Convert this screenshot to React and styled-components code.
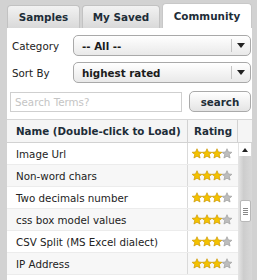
import styled, { createGlobalStyle } from "styled-components";

const GlobalStyle = createGlobalStyle`
  html, body {
    margin: 0;
    padding: 0;
    background: #d2d2d2;
    overflow: hidden;
  }
  body {
    font-family: "DejaVu Sans", Verdana, sans-serif;
    color: #222;
  }
`;

const Frame = styled.div`
  width: 257px;
  height: 280px;
  padding: 3px 5px 0 7px;
  box-sizing: border-box;
  display: flex;
  flex-direction: column;
  overflow: hidden;
`;

const TabBar = styled.div`
  display: flex;
  align-items: flex-end;
  gap: 2px;
  height: 25px;
`;

const Tab = styled.div`
  width: ${(p) => p.width}px;
  height: ${(p) => (p.active ? 25 : 23)}px;
  box-sizing: border-box;
  display: flex;
  align-items: center;
  justify-content: center;
  font-size: 10.4px;
  font-weight: bold;
  color: #1e2d38;
  border-radius: 4px 4px 0 0;
  border: 1px solid ${(p) => (p.active ? "#c8c8c8" : "#c2c2c2")};
  border-bottom: none;
  background: ${(p) =>
    p.active ? "#fff" : "linear-gradient(#f2f2f2, #d9d9d9)"};
`;

const Panel = styled.div`
  flex: 1;
  background: #fff;
  display: flex;
  flex-direction: column;
  padding-top: 7px;
`;

const FormRow = styled.div`
  display: grid;
  grid-template-columns: 61px 1fr;
  align-items: center;
  padding: 0 1px 0 5px;
  margin-bottom: 6px;
`;

const Label = styled.span`
  font-size: 10.3px;
  color: #222;
`;

const Select = styled.div`
  height: 21px;
  box-sizing: border-box;
  border: 1px solid #a9a9a9;
  border-radius: 5px;
  background: linear-gradient(#ffffff, #e9e9e9);
  display: flex;
  align-items: center;
  font-size: 10.3px;
  font-weight: bold;
  color: #1b1b1b;
`;

const SelectText = styled.span`
  flex: 1;
  padding-left: 8px;
`;

const Arrow = styled.span`
  width: 18px;
  height: 13px;
  border-left: 1px solid #c4c4c4;
  display: flex;
  align-items: center;
  justify-content: center;
  &::after {
    content: "";
    border-left: 4px solid transparent;
    border-right: 4px solid transparent;
    border-top: 5px solid #222;
  }
`;

const SearchRow = styled.div`
  display: flex;
  align-items: center;
  justify-content: space-between;
  padding: 2px 1px 0 3px;
  margin-bottom: 7px;
`;

const SearchInput = styled.div`
  width: 172px;
  height: 20px;
  box-sizing: border-box;
  border: 1px solid #cfcfcf;
  font-size: 10.3px;
  color: #c4c4c4;
  display: flex;
  align-items: center;
  padding-left: 4px;
`;

const SearchButton = styled.div`
  width: 62px;
  height: 21px;
  box-sizing: border-box;
  border: 1px solid #aaa;
  border-radius: 5px;
  background: linear-gradient(#ffffff, #e4e4e4);
  font-size: 10.3px;
  font-weight: bold;
  color: #1e2d38;
  display: flex;
  align-items: center;
  justify-content: center;
`;

const Table = styled.div`
  flex: 1;
  display: grid;
  grid-template-columns: 181px 50px 1fr;
  grid-template-rows: 23px 1fr;
  border-top: 1px solid #d6d6d6;
`;

const HeadCell = styled.div`
  background: #f5f5f5;
  border-bottom: 1px solid #d2d2d2;
  border-right: ${(p) => (p.last ? "none" : "1px solid #d2d2d2")};
  font-size: 10.3px;
  font-weight: bold;
  color: #1e2d38;
  display: flex;
  align-items: center;
  padding-left: ${(p) => p.pad || 0}px;
  white-space: nowrap;
`;

const Body = styled.div`
  grid-column: 1 / 3;
  display: flex;
  flex-direction: column;
`;

const Row = styled.div`
  display: grid;
  grid-template-columns: 181px 50px;
  height: 22px;
  box-sizing: border-box;
  border-bottom: 1px solid #ececec;
  background: ${(p) => (p.odd ? "#f7f7f7" : "#fff")};
`;

const NameCell = styled.div`
  font-size: 10.3px;
  color: #222;
  padding-left: 9px;
  display: flex;
  align-items: center;
  border-right: 1px solid #dadada;
`;

const RatingCell = styled.div`
  display: flex;
  align-items: center;
  padding-left: 4px;
`;

const ScrollTrack = styled.div`
  background: linear-gradient(90deg, #e6e6e6, #cdcdcd 40%, #d8d8d8);
  display: flex;
  flex-direction: column;
  align-items: center;
`;

const ScrollUp = styled.div`
  width: 12px;
  height: 13px;
  background: #fff;
  display: flex;
  align-items: center;
  justify-content: center;
  &::after {
    content: "";
    border-left: 3px solid transparent;
    border-right: 3px solid transparent;
    border-bottom: 4px solid #222;
  }
`;

const Thumb = styled.div`
  margin-top: 44px;
  width: 11px;
  height: 22px;
  box-sizing: border-box;
  background: #fff;
  border: 1px solid #b8b8b8;
  border-radius: 2px;
  display: flex;
  flex-direction: column;
  align-items: center;
  justify-content: center;
  gap: 1px;
`;

const Grip = styled.span`
  width: 5px;
  height: 1px;
  background: #888;
`;

const Star = ({ on }) => (
  <svg width="10" height="11" viewBox="1 0 22 23">
    <path
      d="M12 1l3.2 7.1 7.6.7-5.8 5.1 1.8 7.6L12 17.5l-6.8 4 1.8-7.6-5.8-5.1 7.6-.7z"
      fill={on ? "#f4c200" : "#bdbdbd"}
      stroke={on ? "#c89400" : "#9a9a9a"}
      strokeWidth="1.4"
    />
  </svg>
);

const Stars = ({ value }) => (
  <RatingCell>
    {[0, 1, 2, 3].map((i) => (
      <Star key={i} on={i < value} />
    ))}
  </RatingCell>
);

const rows = [
  "Image Url",
  "Non-word chars",
  "Two decimals number",
  "css box model values",
  "CSV Split (MS Excel dialect)",
  "IP Address",
];

export default function App() {
  return (
    <>
      <GlobalStyle />
      <Frame>
        <TabBar>
          <Tab width={73}>Samples</Tab>
          <Tab width={78}>My Saved</Tab>
          <Tab width={90} active>
            Community
          </Tab>
        </TabBar>
        <Panel>
          <FormRow>
            <Label>Category</Label>
            <Select>
              <SelectText>-- All --</SelectText>
              <Arrow />
            </Select>
          </FormRow>
          <FormRow>
            <Label>Sort By</Label>
            <Select>
              <SelectText>highest rated</SelectText>
              <Arrow />
            </Select>
          </FormRow>
          <SearchRow>
            <SearchInput>Search Terms?</SearchInput>
            <SearchButton>search</SearchButton>
          </SearchRow>
          <Table>
            <HeadCell pad={9}>Name (Double-click to Load)</HeadCell>
            <HeadCell pad={6}>Rating</HeadCell>
            <HeadCell last />
            <Body>
              {rows.map((name, i) => (
                <Row key={name} odd={i % 2 === 1}>
                  <NameCell>{name}</NameCell>
                  <Stars value={3} />
                </Row>
              ))}
            </Body>
            <ScrollTrack>
              <ScrollUp />
              <Thumb>
                <Grip />
                <Grip />
                <Grip />
                <Grip />
              </Thumb>
            </ScrollTrack>
          </Table>
        </Panel>
      </Frame>
    </>
  );
}
